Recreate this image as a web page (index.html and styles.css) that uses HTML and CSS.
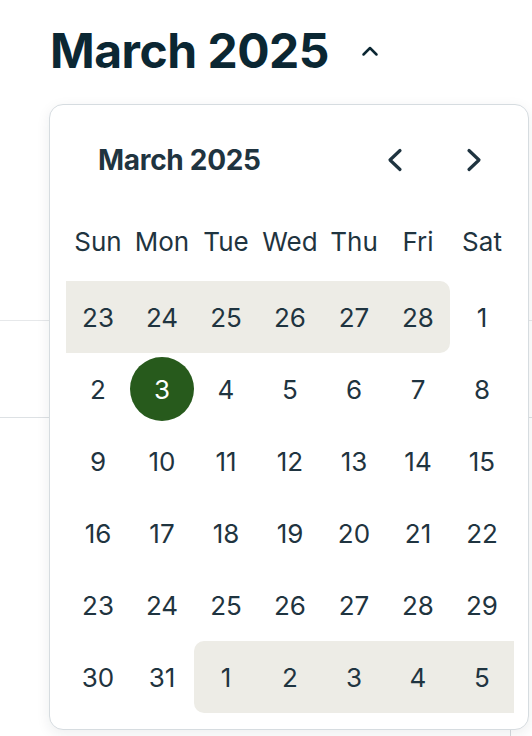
FILE: index.html
```html
<!DOCTYPE html>
<html lang="en">
<head>
<meta charset="utf-8">
<title>Calendar</title>
<link rel="stylesheet" href="styles.css">
</head>
<body>
<div class="page">
  <header class="page-head">
    <h1 class="title">March 2025</h1>
    <button class="toggle" aria-label="Collapse">
      <svg width="18" height="12" viewBox="0 0 18 12"><path d="M2.5 9.5 L9 3 L15.5 9.5" fill="none" stroke="#0b2733" stroke-width="2.5" stroke-linecap="round" stroke-linejoin="round"/></svg>
    </button>
  </header>
  <div class="rows">
    <div class="row r1"></div>
    <div class="row r2"></div>
    <div class="row r3"><div class="cell-main"></div><div class="cell-side"></div></div>
  </div>

  <div class="popover">
    <div class="cal-head">
      <span class="cal-month">March 2025</span>
      <div class="nav">
        <button class="nav-btn" aria-label="Previous month">
          <svg width="16" height="24" viewBox="0 0 16 24"><path d="M13 2.5 L3 12 L13 21.5" fill="none" stroke="#1f3440" stroke-width="3.2" stroke-linecap="round" stroke-linejoin="round"/></svg>
        </button>
        <button class="nav-btn" aria-label="Next month">
          <svg width="16" height="24" viewBox="0 0 16 24"><path d="M3 2.5 L13 12 L3 21.5" fill="none" stroke="#1f3440" stroke-width="3.2" stroke-linecap="round" stroke-linejoin="round"/></svg>
        </button>
      </div>
    </div>
    <div class="weekdays">
      <span>Sun</span><span>Mon</span><span>Tue</span><span>Wed</span><span>Thu</span><span>Fri</span><span>Sat</span>
    </div>
    <div class="weeks">
      <div class="week">
        <div class="outside first"><span>23</span><span>24</span><span>25</span><span>26</span><span>27</span><span>28</span></div>
        <span class="day">1</span>
      </div>
      <div class="week">
        <span class="day">2</span><span class="day selected"><b>3</b></span><span class="day">4</span><span class="day">5</span><span class="day">6</span><span class="day">7</span><span class="day">8</span>
      </div>
      <div class="week">
        <span class="day">9</span><span class="day">10</span><span class="day">11</span><span class="day">12</span><span class="day">13</span><span class="day">14</span><span class="day">15</span>
      </div>
      <div class="week">
        <span class="day">16</span><span class="day">17</span><span class="day">18</span><span class="day">19</span><span class="day">20</span><span class="day">21</span><span class="day">22</span>
      </div>
      <div class="week">
        <span class="day">23</span><span class="day">24</span><span class="day">25</span><span class="day">26</span><span class="day">27</span><span class="day">28</span><span class="day">29</span>
      </div>
      <div class="week">
        <span class="day">30</span><span class="day">31</span>
        <div class="outside last"><span>1</span><span>2</span><span>3</span><span>4</span><span>5</span></div>
      </div>
    </div>
  </div>
</div>
</body>
</html>
```

FILE: styles.css
```css
* { box-sizing: border-box; }
html, body { margin: 0; padding: 0; background: #ffffff; }
body {
  font-family: Inter, "Noto Sans", "Liberation Sans", sans-serif;
  color: #1f3440;
  width: 532px;
  height: 736px;
  overflow: hidden;
}
.page { position: relative; height: 736px; }

.page-head {
  display: flex;
  align-items: center;
  height: 100px;
  padding-left: 50px;
}
.title {
  margin: 0;
  font-size: 48px;
  font-weight: 700;
  color: #0b2733;
  letter-spacing: -0.5px;
}
.toggle {
  border: 0;
  background: none;
  padding: 0;
  margin-left: 32px;
  display: flex;
  margin-top: 2px;
}

.rows { display: flex; flex-direction: column; }
.row.r1 { height: 221px; border-bottom: 1px solid #e6e8ea; }
.row.r2 { height: 97px; border-bottom: 1px solid #dde1e4; }
.row.r3 { height: 320px; display: flex; }
.cell-main { width: 510px; }
.cell-side { flex: 1; border-left: 1px solid #d5dade; }

.popover {
  position: absolute;
  left: 49px;
  top: 104px;
  width: 480px;
  height: 626px;
  background: #ffffff;
  border: 1px solid #d6dce0;
  border-radius: 14px;
  box-shadow: 0 4px 14px rgba(20, 40, 50, 0.08);
  padding: 23px 14px 14px 16px;
}

.cal-head {
  display: flex;
  align-items: center;
  justify-content: space-between;
  height: 64px;
  padding-left: 32px;
}
.cal-month {
  font-size: 28px;
  font-weight: 700;
  color: #1f3440;
  letter-spacing: -0.3px;
}
.nav { display: flex; gap: 31px; margin-right: 16px; }
.nav-btn {
  width: 48px;
  height: 48px;
  border: 0;
  background: none;
  padding: 0;
  display: flex;
  align-items: center;
  justify-content: center;
}

.weekdays {
  display: grid;
  grid-template-columns: repeat(7, 64px);
  height: 72px;
  margin-top: 13px;
  align-items: center;
  justify-items: center;
  font-size: 26px;
}

.weeks { margin-top: 4px; display: flex; flex-direction: column; }
.week { display: flex; height: 72px; }
.day, .outside span {
  width: 64px;
  height: 72px;
  display: flex;
  align-items: center;
  justify-content: center;
  font-size: 26px;
}
.outside { display: flex; background: #edece6; }
.outside.first { border-radius: 0 10px 10px 0; }
.outside.last { border-radius: 10px 0 0 10px; }
.day.selected b {
  width: 64px;
  height: 64px;
  border-radius: 50%;
  background: #275a1c;
  color: #ffffff;
  font-weight: 400;
  display: flex;
  align-items: center;
  justify-content: center;
}
```
